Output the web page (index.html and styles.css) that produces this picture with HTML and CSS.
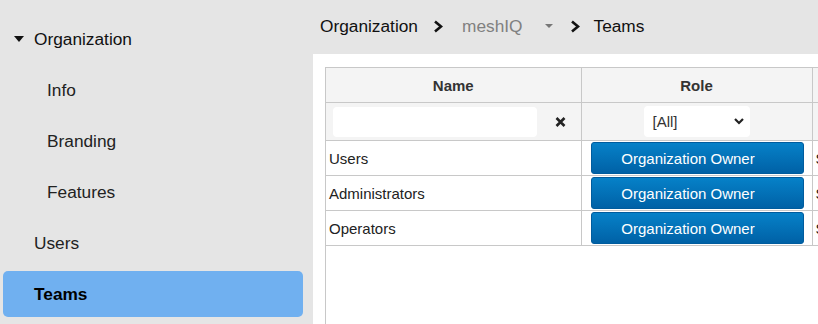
FILE: index.html
```html
<!DOCTYPE html>
<html lang="en">

<head>
    <meta charset="UTF-8">
    <meta name="viewport" content="width=device-width, initial-scale=1.0">
    <title>Teams</title>
    <link rel="stylesheet" href="styles.css">
</head>

<body>
    <div class="layout">
        <nav class="sidebar">
            <div class="nav-item group">
                <svg class="caret" width="10" height="6" viewBox="0 0 10 6"><polygon points="0,0 10,0 5,6" fill="#111"/></svg>
                Organization
            </div>
            <div class="nav-item sub">Info</div>
            <div class="nav-item sub">Branding</div>
            <div class="nav-item sub">Features</div>
            <div class="nav-item">Users</div>
            <div class="nav-item active">Teams</div>
        </nav>

        <div class="main">
            <div class="breadcrumb">
                <span>Organization</span>
                <svg class="chev" width="10" height="13" viewBox="0 0 10 13"><polyline points="2,1.5 8,6.5 2,11.5" fill="none" stroke="#111" stroke-width="2.6"/></svg>
                <span class="crumb-muted">meshIQ</span>
                <svg class="drop" width="8" height="4" viewBox="0 0 8 4"><polygon points="0,0 8,0 4,4" fill="#777"/></svg>
                <svg class="chev" width="10" height="13" viewBox="0 0 10 13"><polyline points="2,1.5 8,6.5 2,11.5" fill="none" stroke="#111" stroke-width="2.6"/></svg>
                <span>Teams</span>
            </div>

            <div class="panel">
                <div class="grid-wrap">
                    <table class="grid">
                        <colgroup>
                            <col class="c-name">
                            <col class="c-role">
                            <col class="c-extra">
                        </colgroup>
                        <tr class="head">
                            <th>Name</th>
                            <th>Role</th>
                            <th></th>
                        </tr>
                        <tr class="filters">
                            <td>
                                <div class="filter-name">
                                    <input type="text" class="filter-input">
                                    <svg class="clear" width="11" height="10" viewBox="0 0 11 10"><path d="M1.5 1 L9.5 9 M9.5 1 L1.5 9" stroke="#222" stroke-width="2.6"/></svg>
                                </div>
                            </td>
                            <td>
                                <div class="select">
                                    <span>[All]</span>
                                    <svg width="10" height="7" viewBox="0 0 10 7"><polyline points="1,1 5,5 9,1" fill="none" stroke="#222" stroke-width="2.2"/></svg>
                                </div>
                            </td>
                            <td></td>
                        </tr>
                        <tr class="row">
                            <td>Users</td>
                            <td><div class="role-btn">Organization Owner</div></td>
                            <td>System</td>
                        </tr>
                        <tr class="row">
                            <td>Administrators</td>
                            <td><div class="role-btn">Organization Owner</div></td>
                            <td>System</td>
                        </tr>
                        <tr class="row">
                            <td>Operators</td>
                            <td><div class="role-btn">Organization Owner</div></td>
                            <td>System</td>
                        </tr>
                    </table>
                </div>
            </div>
        </div>
    </div>
</body>

</html>
```

FILE: styles.css
```css
* {
    margin: 0;
    padding: 0;
    box-sizing: border-box;
}

body {
    background-color: #e5e5e5;
    font-family: "Liberation Sans", Arial, sans-serif;
    color: #222;
    overflow: hidden;
}

.layout {
    display: flex;
    height: 324px;
}

/* sidebar */

.sidebar {
    width: 313px;
    flex-shrink: 0;
    display: flex;
    flex-direction: column;
    gap: 5px;
    padding: 16px 10px 0 3px;
}

.nav-item {
    height: 46px;
    display: flex;
    align-items: center;
    padding-left: 31px;
    font-size: 17.3px;
    color: #222;
    border-radius: 5px;
}

.nav-item.group {
    padding-left: 11px;
    gap: 10px;
    color: #111;
}

.nav-item.sub {
    padding-left: 44px;
}

.nav-item.active {
    background-color: #70b0f0;
    font-weight: bold;
    color: #000;
}

/* breadcrumb */

.main {
    flex: 1;
    display: flex;
    flex-direction: column;
    min-width: 0;
}

.breadcrumb {
    height: 54px;
    padding: 0 0 2px 7px;
    display: flex;
    align-items: center;
    font-size: 17.3px;
    color: #111;
}

.breadcrumb .chev {
    margin: 0 14px 0 15px;
}

.crumb-muted {
    color: #808080;
    margin-left: 5px;
}

.breadcrumb .drop {
    margin-left: 22px;
    margin-right: 2px;
}

.breadcrumb .drop + .chev {
    margin-left: 15px;
}

/* table */

.panel {
    flex: 1;
    background-color: white;
    padding: 13px 0 0 12px;
    overflow: hidden;
}

.grid-wrap {
    height: 100%;
    border-left: 1px solid #c8c8c8;
}

.grid {
    border-collapse: collapse;
    table-layout: fixed;
    width: 700px;
    font-size: 15px;
}

.c-name {
    width: 255px;
}

.c-role {
    width: 231px;
}

.grid th,
.grid td {
    border: 1px solid #c8c8c8;
    padding: 0 3px;
    white-space: nowrap;
    overflow: hidden;
}

.grid tr > :first-child {
    border-left: none;
}

.head th {
    height: 35px;
    background-color: #f4f4f4;
    color: #333;
    font-weight: bold;
}

.filters td {
    height: 38px;
    background-color: #f4f4f4;
}

.filter-name {
    display: flex;
    align-items: center;
    padding-left: 4px;
}

.filter-input {
    width: 204px;
    height: 30px;
    border: none;
    border-radius: 4px;
    background-color: white;
}

.clear {
    margin-left: 18px;
}

.select {
    width: 106px;
    height: 31px;
    margin: 0 auto;
    background-color: white;
    border-radius: 4px;
    display: flex;
    align-items: center;
    justify-content: space-between;
    padding: 0 6px 0 9px;
    color: #333;
    font-size: 15px;
}

.row td {
    height: 35px;
    color: #222;
}

.row td:nth-child(2) {
    padding: 0 8px 0 9px;
}

.role-btn {
    height: 32px;
    display: flex;
    align-items: center;
    justify-content: center;
    padding-right: 18px;
    border-radius: 3px;
    border: 1px solid #005c9e;
    background: linear-gradient(#0681c8, #0061a6);
    color: white;
    font-size: 15px;
}
```
